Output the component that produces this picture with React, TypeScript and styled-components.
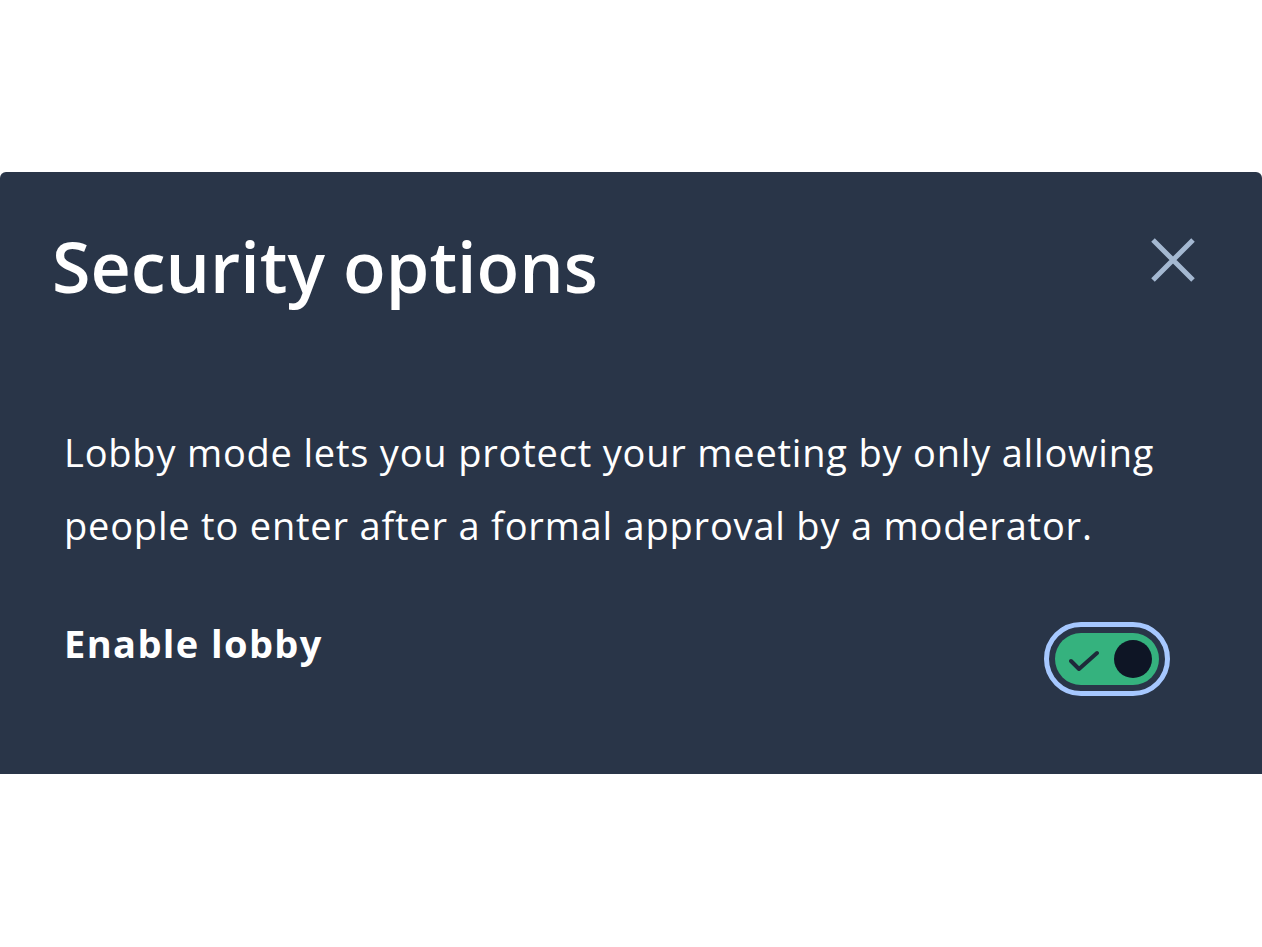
import React, { useState } from 'react';
import styled, { createGlobalStyle } from 'styled-components';

const GlobalStyle = createGlobalStyle`
    html, body {
        margin: 0;
        padding: 0;
        background: #fff;
        font-family: "Open Sans", Lato, sans-serif;
        font-variant-ligatures: none;
    }
`;

const Page = styled.div`
    padding-top: 172px;
`;

const Dialog = styled.section`
    background-color: #293548;
    border-radius: 6px 6px 0 0;
    height: 602px;
    box-sizing: border-box;
    padding: 52px 52px 0 52px;
    color: #fff;
`;

const Header = styled.div`
    display: flex;
    justify-content: space-between;
    align-items: flex-start;
`;

const Title = styled.h1`
    margin: 0;
    font-size: 70px;
    font-weight: 600;
    line-height: 84px;
`;

const CloseButton = styled.button`
    background: none;
    border: none;
    padding: 0;
    margin: 12px 13px 0 0;
    width: 48px;
    height: 48px;
    display: flex;
    align-items: center;
    justify-content: center;
    cursor: pointer;
`;

const Body = styled.div`
    padding: 108px 12px 0 12px;
`;

const Description = styled.p`
    margin: 0;
    font-size: 38px;
    line-height: 73px;
    font-weight: 500;
    letter-spacing: 0.8px;
`;

const Row = styled.div`
    display: flex;
    align-items: flex-start;
    justify-content: space-between;
    margin-top: 60px;
`;

const Label = styled.label`
    font-size: 38px;
    line-height: 42px;
    font-weight: 700;
    letter-spacing: 1.4px;
`;

const FocusRing = styled.div`
    padding: 6px;
    border: 5px solid #a6c8ff;
    border-radius: 40px;
    display: flex;
    margin-right: 28px;
`;

const Track = styled.button<{ $on: boolean }>`
    width: 104px;
    height: 52px;
    border: none;
    border-radius: 26px;
    padding: 4px 7px 0 14px;
    background-color: ${p => (p.$on ? '#35b27e' : '#5e6d7a')};
    display: flex;
    align-items: center;
    justify-content: space-between;
    cursor: pointer;
`;

const Thumb = styled.span`
    width: 38px;
    height: 38px;
    border-radius: 50%;
    background-color: #0e1525;
    margin-top: -4px;
`;

export default function App() {
    const [on, setOn] = useState(true);

    return (
        <Page>
            <GlobalStyle />
            <Dialog>
                <Header>
                    <Title>Security options</Title>
                    <CloseButton aria-label="Close">
                        <svg width="46" height="46" viewBox="0 0 46 46">
                            <path d="M3 3 L43 43 M43 3 L3 43" stroke="#a4b8d1" strokeWidth="5" />
                        </svg>
                    </CloseButton>
                </Header>
                <Body>
                    <Description>
                        Lobby mode lets you protect your meeting by only allowing people to enter after a formal approval by a moderator.
                    </Description>
                    <Row>
                        <Label>Enable lobby</Label>
                        <FocusRing>
                            <Track $on={on} onClick={() => setOn(!on)} aria-label="Enable lobby">
                                <svg width="30" height="22" viewBox="0 0 30 22">
                                    <path d="M2 11 L10 19 L28 3" stroke="#1e2a3a" strokeWidth="4" fill="none" strokeLinecap="round" strokeLinejoin="round" />
                                </svg>
                                <Thumb />
                            </Track>
                        </FocusRing>
                    </Row>
                </Body>
            </Dialog>
        </Page>
    );
}
